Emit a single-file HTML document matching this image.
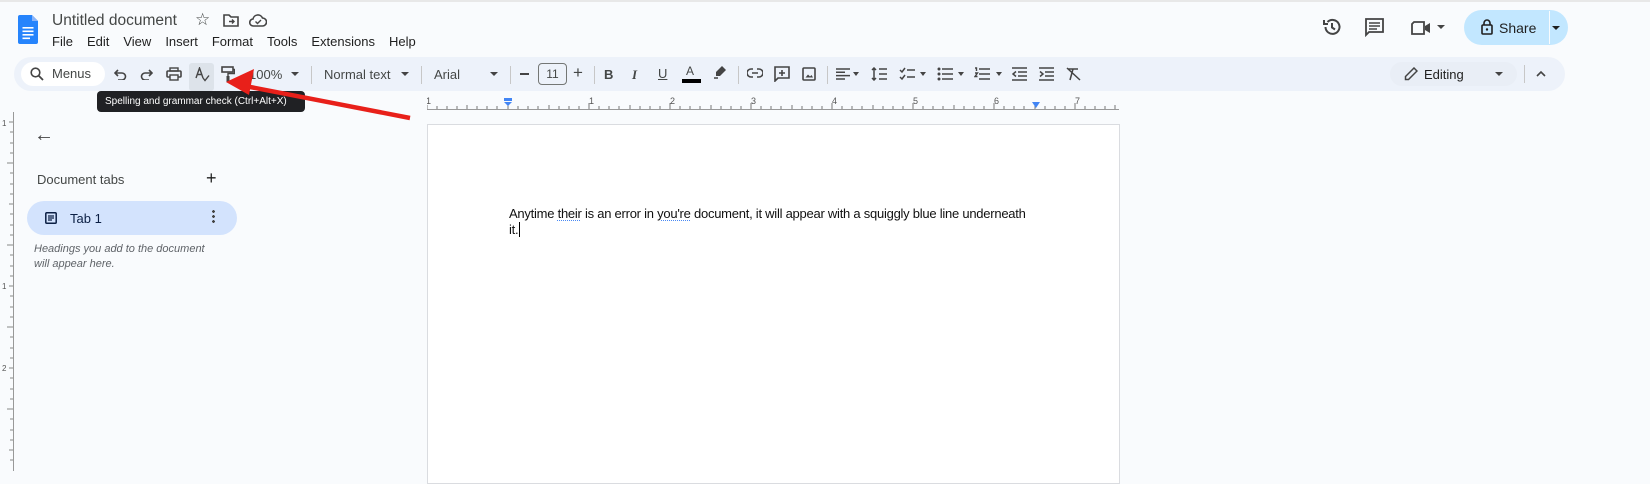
<!DOCTYPE html>
<html><head><style>
*{margin:0;padding:0;box-sizing:border-box}
body{width:1650px;height:471px;overflow:hidden;background:#f9fbfd;font-family:"Liberation Sans",Arial,sans-serif;position:relative;color:#444746}
.a{position:absolute}
.menu span{margin-right:14px}
.tb{position:absolute;left:14px;top:57px;width:1551px;height:34px;background:#edf2fa;border-radius:17px}
.sep{position:absolute;top:66px;width:1px;height:18px;background:#c7c7c7}
svg{display:block}
</style></head><body>
<div class="a" style="left:0;top:0;width:1650px;height:2px;background:#e8e8e8"></div>
<svg class="a" style="left:18px;top:15px" width="20" height="29" viewBox="0 0 20 29"><path d="M0 2a2 2 0 0 1 2-2h12l6 6v21a2 2 0 0 1-2 2H2a2 2 0 0 1-2-2z" fill="#2684fc"/><path d="M14 0v6h6z" fill="#8ab4f8"/><rect x="4.5" y="12" width="11" height="1.6" fill="#fff"/><rect x="4.5" y="15.5" width="11" height="1.6" fill="#fff"/><rect x="4.5" y="19" width="11" height="1.6" fill="#fff"/><rect x="4.5" y="22.5" width="7.5" height="1.6" fill="#fff"/></svg>
<div class="a" style="left:52px;top:12px;font-size:15.5px;color:#444746">Untitled document</div>
<div class="a" style="left:195px;top:10px;font-size:17px">☆</div>
<svg class="a" style="left:223px;top:14px" width="16" height="13" viewBox="0 0 16 13"><path d="M1 1h5l2 2h7v9H1z" fill="none" stroke="#444" stroke-width="1.6"/><path d="M6 7.5h5M9 5.5l2 2-2 2" fill="none" stroke="#444" stroke-width="1.4"/></svg>
<svg class="a" style="left:249px;top:14px" width="18" height="13" viewBox="0 0 18 13"><path d="M4.5 12a3.5 3.5 0 0 1-.5-7A5 5 0 0 1 13.5 4a4 4 0 0 1 0 8z" fill="none" stroke="#444" stroke-width="1.6"/><path d="M6.5 7.5l2 2 3.5-3.5" fill="none" stroke="#444" stroke-width="1.4"/></svg>
<div class="a menu" style="left:52px;top:34px;font-size:13px;color:#1f1f1f"><span>File</span><span>Edit</span><span>View</span><span>Insert</span><span>Format</span><span>Tools</span><span>Extensions</span><span>Help</span></div>
<svg class="a" style="left:1322px;top:17px" width="20" height="20" viewBox="0 0 20 20"><path d="M3.5 10A7 7 0 1 0 5.5 5" fill="none" stroke="#444" stroke-width="2"/><path d="M2 3v4h4" fill="none" stroke="#444" stroke-width="2"/><path d="M10 6v4.5l3 2" fill="none" stroke="#444" stroke-width="2"/></svg>
<svg class="a" style="left:1365px;top:18px" width="19" height="19" viewBox="0 0 19 19"><path d="M1 1h17v13H4l-3 3z" fill="none" stroke="#444" stroke-width="1.8"/><path d="M4 5h11M4 8h11M4 11h8" stroke="#444" stroke-width="1.6"/></svg>
<svg class="a" style="left:1411px;top:21px" width="20" height="14" viewBox="0 0 20 14"><path d="M1 3l2-2h10v12H1z" fill="none" stroke="#444" stroke-width="1.8"/><path d="M14 5l5-3v10l-5-3z" fill="#444"/></svg>
<div class="a" style="left:1437px;top:25px;border:4px solid transparent;border-top:4px solid #444"></div>
<div class="a" style="left:1464px;top:10px;width:104px;height:35px;border-radius:18px;background:#c2e7ff"></div>
<div class="a" style="left:1549px;top:11px;width:1px;height:33px;background:#f9fbfd"></div>
<svg class="a" style="left:1481px;top:19px" width="12" height="16" viewBox="0 0 12 16"><rect x="1" y="6" width="10" height="9" rx="1" fill="none" stroke="#1f1f1f" stroke-width="1.6"/><path d="M3 6V4a3 3 0 0 1 6 0v2" fill="none" stroke="#1f1f1f" stroke-width="1.6"/><circle cx="6" cy="10.5" r="1.2" fill="#1f1f1f"/></svg>
<div class="a" style="left:1499px;top:20px;font-size:14px;color:#1f1f1f">Share</div>
<div class="a" style="left:1552px;top:26px;border:4px solid transparent;border-top:4px solid #1f1f1f"></div>
<div class="tb"></div>
<div class="a" style="left:21px;top:62px;width:84px;height:24px;background:#fff;border-radius:12px"></div>
<svg class="a" style="left:30px;top:67px" width="14" height="14" viewBox="0 0 14 14"><circle cx="5.5" cy="5.5" r="4.3" fill="none" stroke="#444" stroke-width="1.6"/><path d="M8.5 8.5l4.5 4.5" stroke="#444" stroke-width="1.8"/></svg>
<div class="a" style="left:52px;top:66px;font-size:13px">Menus</div>
<svg class="a" style="left:114px;top:69px" width="13" height="11" viewBox="0 0 13 11"><path d="M4 1L1 4l3 3" fill="none" stroke="#444" stroke-width="1.6"/><path d="M1 4h7a3.5 3.5 0 0 1 0 7H4" fill="none" stroke="#444" stroke-width="1.6"/></svg>
<svg class="a" style="left:140px;top:69px" width="13" height="11" viewBox="0 0 13 11"><path d="M9 1l3 3-3 3" fill="none" stroke="#444" stroke-width="1.6"/><path d="M12 4H5a3.5 3.5 0 0 0 0 7h4" fill="none" stroke="#444" stroke-width="1.6"/></svg>
<svg class="a" style="left:166px;top:67px" width="16" height="14" viewBox="0 0 16 14"><rect x="1" y="4" width="14" height="6" rx="1" fill="none" stroke="#444" stroke-width="1.6"/><rect x="4" y="1" width="8" height="3" fill="none" stroke="#444" stroke-width="1.4"/><rect x="4" y="8" width="8" height="5" fill="#edf2fa" stroke="#444" stroke-width="1.4"/></svg>
<div class="a" style="left:189px;top:63px;width:25px;height:28px;background:#dde3ea;border-radius:3px"></div>
<svg class="a" style="left:195px;top:67px" width="15" height="15" viewBox="0 0 15 15"><path d="M1 11L4.5 1 8 11M2.3 7.5h4.4" fill="none" stroke="#444" stroke-width="1.4"/><path d="M8 11l2 2.5 4-5" fill="none" stroke="#444" stroke-width="1.4"/></svg>
<svg class="a" style="left:221px;top:66px" width="14" height="17" viewBox="0 0 14 17"><rect x="1" y="1" width="11" height="5" fill="none" stroke="#444" stroke-width="1.6"/><path d="M12 3.5h1.5v4H7v3" fill="none" stroke="#444" stroke-width="1.4"/><rect x="5.5" y="10" width="3" height="6" fill="#444"/></svg>
<div class="a" style="left:249px;top:67px;font-size:13px">100%</div>
<div class="a" style="left:291px;top:72px;border:4px solid transparent;border-top:4px solid #444"></div>
<div class="sep" style="left:311px"></div>
<div class="a" style="left:324px;top:67px;font-size:13px">Normal text</div>
<div class="a" style="left:401px;top:72px;border:4px solid transparent;border-top:4px solid #444"></div>
<div class="sep" style="left:421px"></div>
<div class="a" style="left:434px;top:67px;font-size:13px">Arial</div>
<div class="a" style="left:490px;top:72px;border:4px solid transparent;border-top:4px solid #444"></div>
<div class="sep" style="left:510px"></div>
<div class="a" style="left:520px;top:73px;width:9px;height:1.6px;background:#444"></div>
<div class="a" style="left:538px;top:63px;width:29px;height:22px;border:1px solid #747775;border-radius:4px;font-size:12px;text-align:center;line-height:20px">11</div>
<div class="a" style="left:573px;top:63px;font-size:17px">+</div>
<div class="sep" style="left:594px"></div>
<div class="a" style="left:604px;top:67px;font-size:13px;font-weight:bold">B</div>
<div class="a" style="left:632px;top:67px;font-size:13px;font-style:italic;font-family:'Liberation Serif',serif;font-weight:bold">I</div>
<div class="a" style="left:658px;top:66px;font-size:13px;text-decoration:underline">U</div>
<div class="a" style="left:686px;top:64px;font-size:12px">A</div>
<div class="a" style="left:682px;top:79px;width:19px;height:4px;background:#000"></div>
<svg class="a" style="left:713px;top:65px" width="14" height="14" viewBox="0 0 14 14"><path d="M9 1l4 4-6 6H3V7z" fill="#444"/><path d="M1 13h4" stroke="#444" stroke-width="1.5"/></svg>
<div class="sep" style="left:738px"></div>
<svg class="a" style="left:747px;top:68px" width="16" height="10" viewBox="0 0 16 10"><path d="M6 1H4a4 4 0 0 0 0 8h2M10 1h2a4 4 0 0 1 0 8h-2M5 5h6" fill="none" stroke="#444" stroke-width="1.6"/></svg>
<svg class="a" style="left:774px;top:66px" width="16" height="16" viewBox="0 0 16 16"><path d="M1 1h14v11H4l-3 3z" fill="none" stroke="#444" stroke-width="1.6"/><path d="M8 4v6M5 7h6" stroke="#444" stroke-width="1.6"/></svg>
<svg class="a" style="left:802px;top:67px" width="14" height="14" viewBox="0 0 14 14"><rect x="1" y="1" width="12" height="12" rx="1" fill="none" stroke="#444" stroke-width="1.6"/><path d="M3.5 10.5l2.5-3 2 2 1.5-1.5 1.5 2.5z" fill="#444"/></svg>
<div class="sep" style="left:827px"></div>
<svg class="a" style="left:836px;top:68px" width="14" height="12" viewBox="0 0 14 12"><path d="M0 1h14M0 4.3h9M0 7.6h14M0 11h9" stroke="#444" stroke-width="1.5"/></svg>
<div class="a" style="left:853px;top:72px;border:3.5px solid transparent;border-top:4px solid #444"></div>
<svg class="a" style="left:871px;top:67px" width="16" height="14" viewBox="0 0 16 14"><path d="M3 1v12M1 3l2-2 2 2M1 11l2 2 2-2M8 2h8M8 7h8M8 12h8" fill="none" stroke="#444" stroke-width="1.5"/></svg>
<svg class="a" style="left:899px;top:67px" width="16" height="14" viewBox="0 0 16 14"><path d="M1 3l2 2 3-4M1 10l2 2 3-4M8 3h8M8 10h8" fill="none" stroke="#444" stroke-width="1.5"/></svg>
<div class="a" style="left:920px;top:72px;border:3.5px solid transparent;border-top:4px solid #444"></div>
<svg class="a" style="left:937px;top:67px" width="16" height="14" viewBox="0 0 16 14"><circle cx="2" cy="2" r="1.5" fill="#444"/><circle cx="2" cy="7" r="1.5" fill="#444"/><circle cx="2" cy="12" r="1.5" fill="#444"/><path d="M5 2h11M5 7h11M5 12h11" stroke="#444" stroke-width="1.5"/></svg>
<div class="a" style="left:958px;top:72px;border:3.5px solid transparent;border-top:4px solid #444"></div>
<svg class="a" style="left:974px;top:67px" width="16" height="14" viewBox="0 0 16 14"><path d="M1 1h1.5v3M1 6h2.5L1 9.5h2.5M5 2h11M5 7h11M5 12h11" fill="none" stroke="#444" stroke-width="1.4"/></svg>
<div class="a" style="left:996px;top:72px;border:3.5px solid transparent;border-top:4px solid #444"></div>
<svg class="a" style="left:1012px;top:67px" width="15" height="14" viewBox="0 0 15 14"><path d="M0 1h15M6 5h9M6 9h9M0 13h15M4 4.5L1 7l3 2.5" fill="none" stroke="#444" stroke-width="1.5"/></svg>
<svg class="a" style="left:1039px;top:67px" width="15" height="14" viewBox="0 0 15 14"><path d="M0 1h15M6 5h9M6 9h9M0 13h15M1 4.5L4 7 1 9.5" fill="none" stroke="#444" stroke-width="1.5"/></svg>
<svg class="a" style="left:1066px;top:67px" width="15" height="14" viewBox="0 0 15 14"><path d="M2 2h10M7 2l-3 11M1 1l13 12" fill="none" stroke="#444" stroke-width="1.5"/></svg>
<div class="a" style="left:1390px;top:62px;width:127px;height:24px;border-radius:12px;background:#e9eef6"></div>
<svg class="a" style="left:1404px;top:67px" width="14" height="14" viewBox="0 0 14 14"><path d="M10 1l3 3-8.5 8.5H1.5v-3z" fill="none" stroke="#444" stroke-width="1.5"/></svg>
<div class="a" style="left:1424px;top:67px;font-size:13px;color:#1f1f1f">Editing</div>
<div class="a" style="left:1495px;top:72px;border:4px solid transparent;border-top:4px solid #444"></div>
<div class="a" style="left:1524px;top:65px;width:1px;height:18px;background:#c7c7c7"></div>
<svg class="a" style="left:1536px;top:70px" width="10" height="7" viewBox="0 0 10 7"><path d="M1 6l4-4 4 4" fill="none" stroke="#444" stroke-width="1.6"/></svg>
<div class="a" style="left:427px;top:96px;width:692px;height:14px">
<svg width="692" height="14" viewBox="0 0 692 14">
<line x1="0" y1="13.5" x2="692" y2="13.5" stroke="#999"/>
<g stroke="#777" stroke-width="1">
<path d="M0 9v4M10 10v3M20 10v3M30 10v3M40 9v4M50 10v3M60 10v3M70 10v3M81 7v6M91 10v3M101 10v3M111 10v3M122 9v4M132 10v3M142 10v3M152 10v3M162 7v6M172 10v3M182 10v3M192 10v3M203 9v4M213 10v3M223 10v3M233 10v3M243 7v6M253 10v3M263 10v3M273 10v3M284 9v4M294 10v3M304 10v3M314 10v3M324 7v6M334 10v3M344 10v3M354 10v3M365 9v4M375 10v3M385 10v3M395 10v3M405 7v6M415 10v3M425 10v3M435 10v3M446 9v4M456 10v3M466 10v3M476 10v3M486 7v6M496 10v3M506 10v3M516 10v3M527 9v4M537 10v3M547 10v3M557 10v3M567 7v6M577 10v3M587 10v3M597 10v3M608 9v4M618 10v3M628 10v3M638 10v3M648 7v6M658 10v3M668 10v3M678 10v3M688 9v4"/>
</g>
<g font-family="Liberation Sans" font-size="9" fill="#555"><text x="-1" y="8">1</text><text x="162" y="8">1</text><text x="243" y="8">2</text><text x="324" y="8">3</text><text x="405" y="8">4</text><text x="486" y="8">5</text><text x="567" y="8">6</text><text x="648" y="8">7</text></g>
<rect x="77" y="2" width="8" height="3" fill="#4285f4"/><path d="M77 6h8l-4 4z" fill="#4285f4"/><path d="M605 6h8l-4 6z" fill="#4285f4"/>
</svg></div>
<svg class="a" style="left:0;top:112px" width="16" height="359" viewBox="0 0 16 359">
<line x1="13.5" y1="0" x2="13.5" y2="359" stroke="#999"/>
<g stroke="#888"><path d="M9 10h4M10 20h3M10 31h3M10 41h3M7 51h6M10 61h3M10 72h3M10 82h3M9 92h4M10 102h3M10 113h3M10 123h3M7 133h6M10 143h3M10 154h3M10 164h3M9 174h4M10 184h3M10 195h3M10 205h3M7 215h6M10 225h3M10 236h3M10 246h3M9 256h4M10 266h3M10 277h3M10 287h3M7 297h6M10 307h3M10 318h3M10 328h3M9 338h4M10 348h3"/></g>
<g font-size="8" fill="#555" font-family="Liberation Sans"><text x="2" y="14">1</text><text x="2" y="177">1</text><text x="2" y="259">2</text></g>
</svg>
<div class="a" style="left:34px;top:124px;font-size:20px;color:#444">←</div>
<div class="a" style="left:37px;top:172px;font-size:13px;color:#444746">Document tabs</div>
<div class="a" style="left:206px;top:168px;font-size:18px;color:#1f1f1f">+</div>
<div class="a" style="left:27px;top:201px;width:210px;height:34px;border-radius:17px;background:#d3e3fd"></div>
<svg class="a" style="left:45px;top:212px" width="12" height="12" viewBox="0 0 12 12"><rect x=".8" y=".8" width="10.4" height="10.4" rx="1" fill="none" stroke="#0b1f44" stroke-width="1.5"/><path d="M3 4h6M3 6h6M3 8h4" stroke="#0b1f44" stroke-width="1.2"/></svg>
<div class="a" style="left:70px;top:211px;font-size:13px;color:#0b1f44">Tab 1</div>
<div class="a" style="left:212px;top:209px;width:3px;height:14px;background:radial-gradient(circle,#444 1.3px,transparent 1.5px) 0 0/3px 5px"></div>
<div class="a" style="left:34px;top:242px;font-size:11px;font-style:italic;color:#5f6368;line-height:15px">Headings you add to the document<br>will appear here.</div>
<div class="a" style="left:427px;top:124px;width:693px;height:360px;background:#fff;border:1px solid #dadce0"></div>
<div class="a" style="left:509px;top:206px;font-size:13px;color:#111;line-height:16px;letter-spacing:-0.25px">Anytime <span style="text-decoration:underline dotted #4a8af4 1px;text-underline-offset:2px">their</span> is an error in <span style="text-decoration:underline dotted #4a8af4 1px;text-underline-offset:2px">you're</span> document, it will appear with a squiggly blue line underneath<br>it.<span style="border-left:1.5px solid #000;margin-left:1px"></span></div>
<div class="a" style="left:97px;top:91px;width:208px;height:21px;background:#202124;border-radius:4px;color:#fff;font-size:10px;line-height:21px;padding-left:8px;white-space:nowrap">Spelling and grammar check (Ctrl+Alt+X)</div>
<svg class="a" style="left:0;top:0" width="450" height="130" viewBox="0 0 450 130"><line x1="410" y1="118" x2="245" y2="86" stroke="#e8201a" stroke-width="4.5"/><path d="M226 82l28-13-5 26z" fill="#e8201a"/></svg>
</body></html>
